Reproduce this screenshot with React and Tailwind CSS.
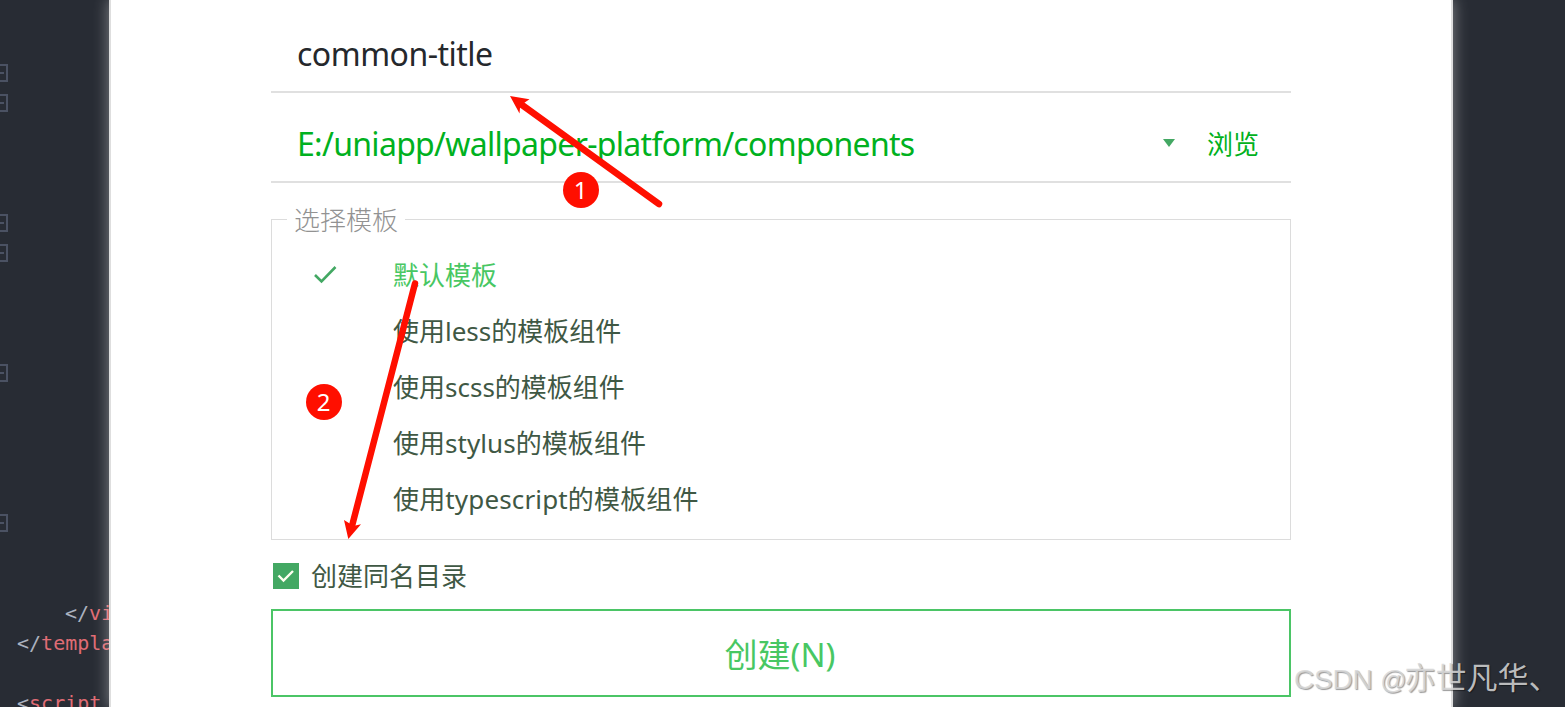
import React, { useState } from "react";
import clsx from "clsx";

const codeLines = [
  { fold: false }, { fold: false }, { fold: true }, { fold: true },
  { fold: false }, { fold: false }, { fold: false }, { fold: true },
  { fold: true }, { fold: false }, { fold: false }, { fold: false },
  { fold: true }, { fold: false }, { fold: false }, { fold: false },
  { fold: false }, { fold: true }, { fold: false }, { fold: false },
  { indent: true, open: "</", tag: "vi" },
  { open: "</", tag: "templa" },
  { fold: false },
  { open: "<", tag: "script" },
];

const templates = [
  { name: "默认模板", spacing: "tracking-normal" },
  { name: "使用less的模板组件", spacing: "tracking-normal" },
  { name: "使用scss的模板组件", spacing: "tracking-normal" },
  { name: "使用stylus的模板组件", spacing: "tracking-[0.05px]" },
  { name: "使用typescript的模板组件", spacing: "tracking-[0.15px]" },
];

const CodePane = () => (
  <div className="w-[109px] shrink-0 -mt-[2px] font-['DejaVu_Sans_Mono',monospace] text-[20px]">
    {codeLines.map((line, i) => (
      <div key={i} className="flex h-[30px] items-center">
        <div className="w-[17px] shrink-0">
          {line.fold && (
            <div className="flex h-[18px] w-2 items-center border-y-2 border-r-2 border-[#4b5263]">
              <div className="h-[2px] w-1 bg-[#4b5263]" />
            </div>
          )}
        </div>
        {line.tag && (
          <span className={clsx("whitespace-pre leading-[30px]", line.indent && "pl-12")}>
            <span className="text-[#abb2bf]">{line.open}</span>
            <span className="text-[#e06c75]">{line.tag}</span>
          </span>
        )}
      </div>
    ))}
  </div>
);

const Marker = ({ children, className }) => (
  <div
    className={clsx(
      "absolute flex size-9 items-center justify-center rounded-full bg-[#ff0f00] pr-px text-[24px] leading-none text-white",
      className
    )}
  >
    {children}
  </div>
);

const Arrows = () => (
  <svg
    className="pointer-events-none absolute left-0 top-0"
    width="1565"
    height="707"
    fill="#ff0f00"
    stroke="#ff0f00"
  >
    <path d="M659 204 L520 103.5" strokeWidth="6.5" strokeLinecap="round" />
    <path d="M510 96 L529.5 99.3 L524 103 L520 108 L519.5 113.5 Z" stroke="none" />
    <path d="M415 283.5 L352 526" strokeWidth="6.5" strokeLinecap="round" />
    <path d="M348.3 539 L344 520 L350 523.7 L355.5 525.5 L361 524.3 Z" stroke="none" />
  </svg>
);

const App = () => {
  const [selected, setSelected] = useState(0);
  const [sameDir, setSameDir] = useState(true);

  return (
    <div className="relative flex h-[707px] w-[1565px] overflow-hidden bg-[#282c34] font-['Noto_Sans','Noto_Sans_CJK_SC',sans-serif]">
      <CodePane />

      <div className="relative w-[1344px] shrink-0 border-x-2 border-[#dedede] bg-white px-40 shadow-[0_0_14px_1px_rgba(255,255,255,0.38)]">
        <div className="flex h-[93px] items-center border-b-2 border-[#e0e0e0] pl-[26px] pt-4 text-[32px] tracking-[-0.5px] text-[#25282c]">
          common-title
        </div>

        <div className="flex h-[90px] items-center border-b-2 border-[#e0e0e0] pl-[26px] text-[#00b120]">
          <span className="flex-1 pt-3.5 text-[32px] leading-10 tracking-[-0.7px]">
            E:/uniapp/wallpaper-platform/components
          </span>
          <svg width="12" height="8" viewBox="0 0 12 8" className="mr-8 mt-3" fill="#43a863">
            <path d="M0 0 H12 L6 8 Z" />
          </svg>
          <button className="mr-8 pt-3 font-['Noto_Sans_CJK_SC',sans-serif] text-[26px] leading-9">浏览</button>
        </div>

        <fieldset className="mt-[18px] h-[339px] border border-[#dcdcdc]">
          <legend className="ml-[15px] h-9 px-[7px] font-['Noto_Sans_CJK_SC',sans-serif] text-[26px] font-light leading-9 text-[#929292]">
            选择模板
          </legend>
          <div className="pt-[10px]">
            {templates.map((item, i) => (
              <div
                key={item.name}
                onClick={() => setSelected(i)}
                className={clsx(
                  "flex h-14 items-center text-[26px]",
                  item.spacing,
                  selected === i ? "text-[#48c763]" : "text-[#3f5844]"
                )}
              >
                <div className="w-[121px] pl-[41px]">
                  {selected === i && (
                    <svg width="26" height="22" viewBox="0 0 26 22" fill="none" stroke="#43a863" strokeWidth="2.6">
                      <path d="M2 11 L8.5 17.5 L22.5 3" />
                    </svg>
                  )}
                </div>
                <span>{item.name}</span>
              </div>
            ))}
          </div>
        </fieldset>

        <label className="flex h-[69px] items-center pl-[2px] pt-[3px] text-[26px] text-[#3f5844]">
          <span
            onClick={() => setSameDir(!sameDir)}
            className="mr-3 flex size-[26px] items-center justify-center bg-[#43a863]"
          >
            {sameDir && (
              <svg width="18" height="14" viewBox="0 0 18 14" fill="none" stroke="#fffff0" strokeWidth="2.4">
                <path d="M1.5 6.5 L6.5 11.5 L16 2" />
              </svg>
            )}
          </span>
          创建同名目录
        </label>

        <button className="flex h-[88px] w-full items-center justify-center border-2 border-[#4bc566] pr-0.5 pt-1 text-[33px] text-[#48c763]">
          创建(N)
        </button>
      </div>

      <Arrows />
      <Marker className="left-[563px] top-[172px]">1</Marker>
      <Marker className="left-[306px] top-[384px]">2</Marker>

      <div className="absolute bottom-[7px] left-[1294px] whitespace-nowrap font-['Liberation_Sans','Noto_Sans_CJK_SC',sans-serif] text-[28px] leading-10 text-[#d8d8d8]/85 [text-shadow:1px_1px_1px_rgba(0,0,0,0.4)]">
        <span className="tracking-[-0.2px]">CSDN </span>
        <span className="text-[26px]">@</span>
        <span className="-ml-0.5 text-[31px]">亦世凡华、</span>
      </div>
    </div>
  );
};

export default App;
